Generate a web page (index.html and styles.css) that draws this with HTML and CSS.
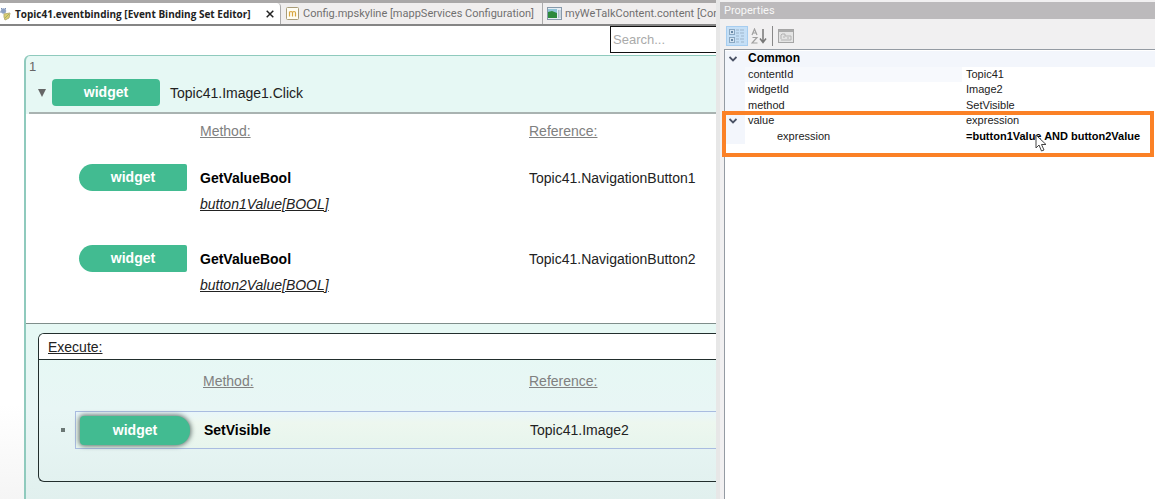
FILE: index.html
```html
<!DOCTYPE html>
<html lang="en">
<head>
<meta charset="utf-8">
<title>Event Binding Set Editor</title>
<link rel="stylesheet" href="styles.css">
</head>
<body>
<main class="editor">
  <div class="tabs" role="tablist">
    <div class="tab tab-active">
      <svg class="tab-icon" width="12" height="14" viewBox="0 0 12 14" aria-hidden="true"><circle cx="3.500" cy="4" r="2.300" fill="#8ba0c4" stroke="#8fa2c2"/><path d="M1 1l1 1M6 1L5 2M0 5h1" stroke="#7b91b8"/><path d="M4 7l6-1-1 5-4 2-1-3z" fill="#dccf70" stroke="#b9b074"/><path d="M5 11l4-4" stroke="#a3ae6c"/></svg>
      <button class="tab-label" type="button" role="tab" aria-selected="true">Topic41.eventbinding [Event Binding Set Editor]</button>
      <button class="tab-close" type="button" aria-label="Close"><svg width="8" height="8" viewBox="0 0 8 8"><path d="M.7.7l6.600 6.600M7.300.7L.7 7.300" stroke="#222" stroke-width="1.500"/></svg></button>
    </div>
    <div class="tab tab-config">
      <svg class="tab-icon" width="13" height="13" viewBox="0 0 13 13" aria-hidden="true"><rect x=".5" y=".5" width="12" height="12" rx="1" fill="#fffdf3" stroke="#a99c78"/><path d="M3.500 9.500V4.500M3.500 6q0-1.500 1.500-1.500t1.500 1.500v3.500M6.500 6q0-1.500 1.500-1.500t1.500 1.500v3.500" fill="none" stroke="#d9a63e" stroke-width="1.200"/></svg>
      <button class="tab-label" type="button" role="tab" aria-selected="false">Config.mpskyline [mappServices Configuration]</button>
    </div>
    <div class="tab tab-content">
      <svg class="tab-icon" width="15" height="13" viewBox="0 0 15 13" aria-hidden="true"><rect x=".5" y=".5" width="14" height="12" fill="#e5edf3" stroke="#8799aa"/><rect x="1" y="2" width="9" height="9" fill="#8fc4d8"/><path d="M1 5l4-1 5 2v5H1z" fill="#2d8a3c"/><path d="M11.500 3v8M13 3v8" stroke="#aebdca"/></svg>
      <button class="tab-label" type="button" role="tab" aria-selected="false">myWeTalkContent.content [Con</button>
    </div>
  </div>

  <div class="canvas">
    <input class="search" type="text" placeholder="Search..." aria-label="Search">
    <section class="binding">
      <header class="event">
        <div class="index">1</div>
        <div class="event-row">
          <button class="collapse" type="button" aria-label="Collapse"><svg width="8" height="8" viewBox="0 0 8 8"><path d="M0 0h8L4 8z" fill="#666"/></svg></button>
          <span class="badge">widget</span>
          <span class="event-name">Topic41.Image1.Click</span>
        </div>
      </header>

      <div class="queries">
        <div class="row heads"><span></span><span class="head">Method:</span><span class="head">Reference:</span></div>
        <div class="query">
          <div class="row"><span class="badge badge-query">widget</span><b>GetValueBool</b><span>Topic41.NavigationButton1</span></div>
          <div class="row param-row"><span></span><em class="param">button1Value[BOOL]</em></div>
        </div>
        <div class="query">
          <div class="row"><span class="badge badge-query">widget</span><b>GetValueBool</b><span>Topic41.NavigationButton2</span></div>
          <div class="row param-row"><span></span><em class="param">button2Value[BOOL]</em></div>
        </div>
      </div>

      <div class="execute">
        <div class="execute-title"><u>Execute:</u></div>
        <div class="execute-body">
          <div class="action-grid action-heads"><span></span><span class="head">Method:</span><span class="head">Reference:</span></div>
          <div class="action-line">
            <span class="bullet"></span>
            <div class="action action-grid"><span class="badge badge-action">widget</span><b>SetVisible</b><span>Topic41.Image2</span></div>
          </div>
        </div>
      </div>
    </section>
  </div>
</main>

<aside class="properties">
  <h2 class="properties-title">Properties</h2>
  <div class="toolbar">
    <button class="tool tool-on" type="button" aria-label="Categorized"><svg width="18" height="16" viewBox="0 0 18 16"><g fill="#d5e4f2" stroke="#8ba8c2"><rect x="1.500" y="1.500" width="5" height="5"/><rect x="1.500" y="9.500" width="5" height="5"/></g><path d="M3 4h2M4 3v2M3 12h2M4 11v2" stroke="#456b8d"/><path d="M8 2h3M8 5h3M8 8h3M8 11h3M8 14h3M12 2h4M12 5h4M13 8h3M12 11h4M13 14h3" stroke="#9db5cb"/></svg></button>
    <button class="tool" type="button" aria-label="Alphabetical"><svg width="16" height="16" viewBox="0 0 16 16" fill="none"><path d="M1 7l2.500-6L6 7M2 5h3M1.500 9.500H6l-5 5.500h5.500" stroke="#a0a0a0" stroke-width="1.200"/><path d="M12 1v12M9 10.500l3 4 3-4" stroke="#777" stroke-width="1.500"/></svg></button>
    <span class="divider"></span>
    <button class="tool" type="button" aria-label="Property pages"><svg width="16" height="14" viewBox="0 0 16 14"><rect x=".5" y=".5" width="15" height="13" fill="#e4e4e4" stroke="#a5a5a5"/><path d="M1 2h14" stroke="#aaa" stroke-width="2"/><path d="M3 10V6l1-1h3v2h6v4H3M5 8h2M9 9h2" fill="none" stroke="#b2b2b2"/></svg></button>
  </div>
  <div class="sheet">
    <table class="props">
      <colgroup><col class="col-toggle"><col class="col-name"><col></colgroup>
      <tbody>
        <tr class="category"><td><button class="chevron" type="button" aria-label="Collapse Common"><svg width="8" height="6" viewBox="0 0 8 6"><path d="M.5 1L4 4.500 7.500 1" fill="none" stroke="#4a5264" stroke-width="1.800"/></svg></button></td><th scope="rowgroup" colspan="2">Common</th></tr>
        <tr class="tinted"><td></td><th scope="row">contentId</th><td>Topic41</td></tr>
        <tr><td></td><th scope="row">widgetId</th><td>Image2</td></tr>
        <tr><td></td><th scope="row">method</th><td>SetVisible</td></tr>
        <tr><td><button class="chevron" type="button" aria-label="Collapse value"><svg width="8" height="6" viewBox="0 0 8 6"><path d="M.5 1L4 4.500 7.500 1" fill="none" stroke="#4a5264" stroke-width="1.800"/></svg></button></td><th scope="row">value</th><td>expression</td></tr>
        <tr><td></td><th scope="row" class="nested">expression</th><td><b>=button1Value AND button2Value</b></td></tr>
      </tbody>
    </table>
    <div class="highlight"></div>
    <svg class="cursor" width="12" height="18" viewBox="0 0 12 18" aria-hidden="true"><path d="M1 1v13l3-3 2.500 6 2.500-1-2.500-5.500H11z" fill="#fff" stroke="#444"/></svg>
  </div>
</aside>
</body>
</html>
```

FILE: styles.css
```css
* { box-sizing: border-box; }

body {
  margin: 0;
  min-height: 100vh;
  display: grid;
  grid-template-columns: minmax(0, 1fr) 439px;
  font: 14px/20px "Liberation Sans", Arial, sans-serif;
  color: #222;
  background: #fff;
}

button {
  margin: 0;
  padding: 0;
  border: 0;
  background: none;
  font: inherit;
  color: inherit;
}

svg { display: block; flex: none; }

.editor {
  display: flex;
  flex-direction: column;
  overflow: hidden;
}

/* Tabs */
.tabs {
  display: flex;
  height: 26px;
  border-top: 3px solid #aaa8a8;
  border-bottom: 2px solid #858585;
  background: #f0eeee;
  font: 11px/20px Roboto, "Open Sans", sans-serif;
  color: #707070;
}

.tab {
  display: flex;
  flex: none;
  align-items: center;
  white-space: nowrap;
}

.tab-active {
  width: 281px;
  gap: 3px;
  border-right: 1px solid #aaa;
  border-top-right-radius: 4px;
  background: #fff;
  color: #222;
  font: 700 10px/20px "Open Sans", "Noto Sans", sans-serif;
}

.tab-close { margin: 0 6px 0 auto; }

.tab-config {
  width: 261px;
  gap: 4px;
  padding-left: 5px;
}

.tab-content {
  gap: 3px;
  padding-left: 4px;
  border-left: 1px solid #aaa;
}

/* Binding canvas */
.canvas {
  flex: 1;
  display: flex;
  flex-direction: column;
  padding-left: 24px;
  background: linear-gradient(#fff 80%, #f5f5f5);
}

.search {
  align-self: flex-end;
  width: 106px;
  height: 27px;
  margin-bottom: 2px;
  padding: 0 2px;
  border: 1px solid #111;
  border-right: 0;
  border-radius: 0;
  background: #fff;
  font: 13px/20px "Liberation Sans", Arial, sans-serif;
}

.search::placeholder { color: #aaa; }

.binding {
  flex: 1;
  padding-left: 3px;
  border: 2px solid #8fcabd;
  border-width: 1px 0 0 2px;
  border-top-left-radius: 6px;
  background: linear-gradient(#e6f8f4 65%, #e8f6f5 80%, #e1f0ee);
}

.index {
  height: 22px;
  font-size: 13px;
  line-height: 22px;
  color: #666;
}

.event {
  height: 58px;
  border-bottom: 2px solid #a9b3b1;
}

.event-row {
  display: flex;
  align-items: center;
  padding: 1px 0 0 9px;
}

.event-name { margin-left: 10px; }

.collapse { margin-right: 6px; }

.badge {
  display: block;
  width: 108px;
  height: 27px;
  border-radius: 4px;
  background: #42bb91;
  color: #fff;
  font-weight: 700;
  line-height: 27px;
  text-align: center;
}

.queries {
  height: 210px;
  margin-left: -3px;
  padding: 7px 0 0 53px;
  border-bottom: 1px solid #7f8e8b;
  background: #fff;
}

.row {
  display: grid;
  grid-template-columns: 121px 329px 1fr;
  align-items: center;
  white-space: nowrap;
}

.row b, .action b { color: #000; }

.heads { margin-bottom: 23px; }

.head {
  color: #808080;
  text-decoration: underline;
}

.query { height: 81px; }

.param-row { margin-top: 3px; }

.param { text-decoration: underline; }

.badge-query { border-radius: 14px 2px 2px 14px; }

/* Execute block */
.execute {
  height: 149px;
  margin: 9px 0 0 9px;
  border: 1px solid #222e2d;
  border-right: 0;
  border-radius: 6px 0 0 6px;
  overflow: hidden;
}

.execute-title {
  height: 26px;
  padding-left: 9px;
  border-bottom: 1px solid #222e2d;
  background: #fff;
  line-height: 26px;
}

.action-grid {
  display: grid;
  grid-template-columns: 124px 326px 1fr;
  align-items: center;
  padding-left: 4px;
}

.action-heads {
  margin-left: 36px;
  padding-top: 11px;
}

.action-line {
  display: flex;
  align-items: center;
  gap: 10px;
  margin-top: 20px;
  padding-left: 22px;
}

.bullet {
  width: 4px;
  height: 4px;
  background: #6b7775;
}

.action {
  flex: 1;
  height: 38px;
  border: 1px solid #a9bce0;
  border-right: 0;
  background: linear-gradient(#e8f6fa, #edf7ef 30%, #e7f5ed);
}

.badge-action {
  width: 110px;
  height: 29px;
  border-radius: 4px 14px 14px 4px;
  line-height: 29px;
  box-shadow: 0 0 5px 1px #5d6d69;
}

/* Properties pane */
.properties {
  display: flex;
  flex-direction: column;
  padding: 2px 0 0 4px;
  border-left: 4px solid #e7e7e7;
  background: #f1f0f1;
  font-size: 11px;
}

.properties-title {
  height: 17px;
  margin: 0 0 0 -4px;
  padding-left: 4px;
  background: #bcbabc;
  color: #f7f7f7;
  font: 11px/18px Roboto, "Open Sans", sans-serif;
}

.toolbar {
  display: flex;
  align-items: center;
  height: 30px;
  padding: 5px 2px 1px;
}

.tool {
  display: grid;
  place-items: center;
  width: 22px;
  height: 20px;
}

.tool-on {
  border: 1px solid #a6cdf0;
  background: #c5dff6;
}

.divider {
  width: 1px;
  height: 20px;
  margin: 0 2px 0 2px;
  background: #888;
}

.sheet {
  position: relative;
  flex: 1;
  padding-top: 1px;
  border: 1px solid #949ba3;
  border-width: 1px 0 0 1px;
  background: #fff;
}

.props {
  width: 100%;
  height: 93px;
  table-layout: fixed;
  border-collapse: collapse;
  line-height: 13px;
  color: #222;
}

.col-toggle { width: 20px; }
.col-name { width: 217px; }

.props td, .props th {
  padding: 0 0 0 4px;
  font-weight: 400;
  text-align: left;
  white-space: nowrap;
}

.props td:first-child { background: #f3f6fc; }
.props .category { background: #f3f6fc; }
.props .tinted th { background: #f7f9fd; }
.props .category th { color: #000; font-size: 12px; font-weight: 700; }
.props th { padding-left: 3px; }
.props .nested { padding-left: 32px; }
.props b { color: #000; }

.chevron { display: block; }

.highlight {
  position: absolute;
  top: 61px;
  left: -3px;
  right: 1px;
  height: 46px;
  border: 4px solid #fb8126;
}

.cursor {
  position: absolute;
  top: 84px;
  left: 310px;
}
```
